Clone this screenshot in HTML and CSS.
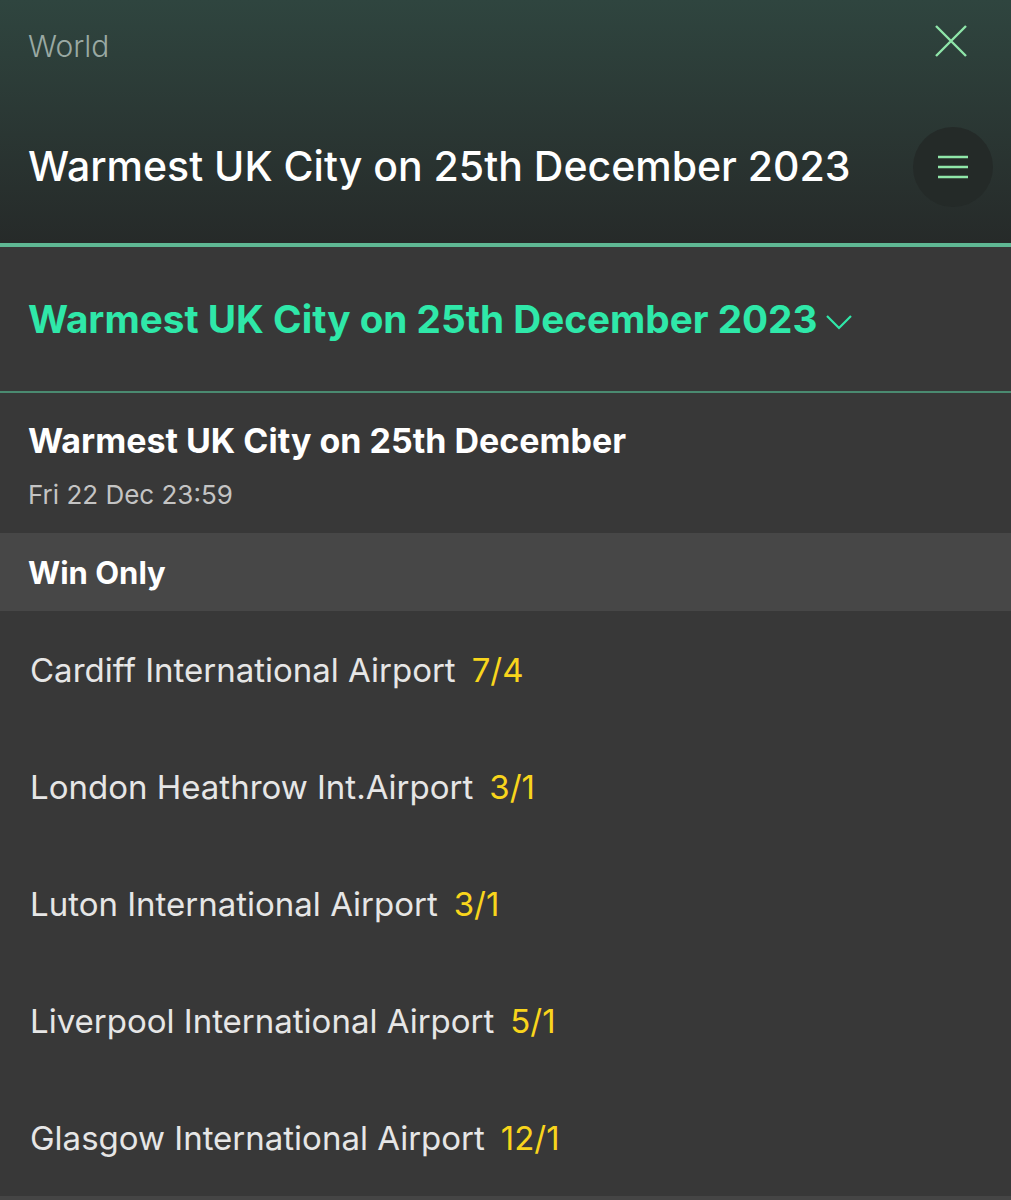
FILE: index.html
```html
<!DOCTYPE html>
<html lang="en">
<head>
  <meta charset="UTF-8">
  <meta name="viewport" content="width=device-width, initial-scale=1.0">
  <title>Warmest UK City on 25th December 2023</title>
  <link rel="stylesheet" href="styles.css">
</head>
<body>
  <header class="header">
    <div class="header-top">
      <span class="crumb">World</span>
      <button class="close" aria-label="Close">
        <svg width="34" height="34" viewBox="0 0 34 34"><path d="M2 2 L32 32 M32 2 L2 32" stroke="#8fe6a9" stroke-width="2.4" fill="none"/></svg>
      </button>
    </div>
    <div class="header-main">
      <h1>Warmest UK City on 25th December 2023</h1>
      <button class="menu" aria-label="Menu">
        <svg width="30" height="24" viewBox="0 0 30 24"><path d="M0 2 H30 M0 12 H30 M0 22 H30" stroke="#8fe6a9" stroke-width="2.4" fill="none"/></svg>
      </button>
    </div>
  </header>

  <div class="market-select">
    <span>Warmest UK City on 25th December 2023</span>
    <svg width="28" height="18" viewBox="0 0 28 18"><path d="M2 3 L14 15 L26 3" stroke="#2fe8a9" stroke-width="2.2" fill="none"/></svg>
  </div>

  <div class="event">
    <h2>Warmest UK City on 25th December</h2>
    <div class="event-date">Fri 22 Dec 23:59</div>
  </div>

  <div class="group">Win Only</div>

  <ul class="selections">
    <li><span class="name">Cardiff International Airport</span><span class="odds">7/4</span></li>
    <li><span class="name">London Heathrow Int.Airport</span><span class="odds">3/1</span></li>
    <li><span class="name">Luton International Airport</span><span class="odds">3/1</span></li>
    <li><span class="name">Liverpool International Airport</span><span class="odds">5/1</span></li>
    <li><span class="name">Glasgow International Airport</span><span class="odds">12/1</span></li>
  </ul>
</body>
</html>
```

FILE: styles.css
```css
body {
  margin: 0;
  background: #383838;
  font-family: Inter, Roboto, "Liberation Sans", sans-serif;
  color: #fff;
}
button {
  background: none;
  border: none;
  padding: 0;
  cursor: pointer;
}
.header {
  height: 243px;
  background: linear-gradient(to bottom, #2f453f, #262a29);
  border-bottom: 4px solid #5fb894;
  padding: 0 18px 0 28px;
}
.header-top {
  height: 92px;
  display: flex;
  justify-content: space-between;
  align-items: center;
}
.crumb {
  font-size: 30px;
  font-weight: 300;
  color: #9aa9a3;
}
.close {
  width: 34px;
  height: 34px;
  margin-right: 25px;
  margin-top: -10px;
}
.header-main {
  height: 150px;
  display: flex;
  justify-content: space-between;
  align-items: center;
}
h1 {
  margin: 0;
  font-size: 41px;
  font-weight: 500;
  margin-top: -3px;
}
.menu {
  width: 80px;
  height: 80px;
  border-radius: 50%;
  background: #242a28;
  display: flex;
  align-items: center;
  justify-content: center;
}
.market-select {
  height: 144px;
  display: flex;
  align-items: center;
  gap: 8px;
  padding-left: 28px;
  border-bottom: 2px solid #4a8a70;
  font-size: 38.7px;
  font-weight: 700;
  color: #2fe8a9;
}
.market-select svg {
  margin-top: 6px;
}
.event {
  height: 140px;
  padding-left: 28px;
  box-sizing: border-box;
  padding-top: 27px;
}
h2 {
  margin: 0;
  font-size: 34px;
  font-weight: 700;
}
.event-date {
  margin-top: 18px;
  font-size: 26px;
  color: #c4c4c4;
}
.group {
  height: 78px;
  display: flex;
  align-items: center;
  padding-left: 28px;
  background: #474747;
  font-size: 31px;
  font-weight: 700;
}
.selections {
  list-style: none;
  margin: 0;
  padding: 0;
  border-bottom: 4px solid #454545;
}
.selections li {
  height: 117px;
  display: flex;
  align-items: center;
  gap: 16px;
  padding-left: 30px;
  font-size: 33px;
}
.name {
  color: #e6e6e6;
}
.odds {
  color: #f8d51c;
}
```
